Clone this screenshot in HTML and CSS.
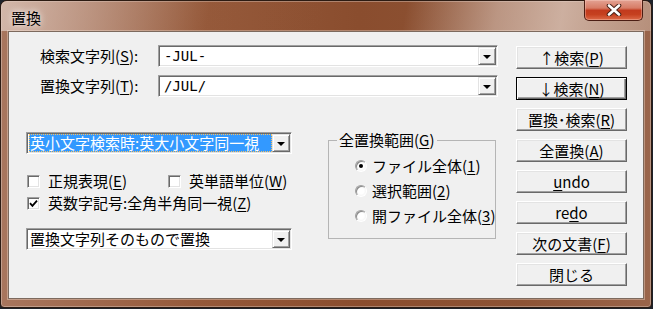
FILE: index.html
```html
<!DOCTYPE html>
<html lang="ja">
<head>
    <meta charset="UTF-8">
    <title>置換</title>
    <link rel="stylesheet" href="styles.css">
</head>
<body>

<div class="window">
    <div class="titlebar">
        <span class="title">置換</span>
        <button class="close-btn" type="button">
            <svg width="16" height="12" viewBox="0 0 16 12">
                <path d="M3 1.5 L13 10.5 M13 1.5 L3 10.5" stroke="#4a2218" stroke-width="4.6" stroke-linecap="round"/>
                <path d="M3 1.5 L13 10.5 M13 1.5 L3 10.5" stroke="#ffffff" stroke-width="2.6" stroke-linecap="round"/>
            </svg>
        </button>
    </div>

    <div class="panel">
        <div class="main">
            <div class="field-row">
                <label class="field-label">検索文字列(<u>S</u>):</label>
                <div class="combo edit">
                    <span class="combo-text mono">-JUL-</span>
                    <span class="drop-btn"></span>
                </div>
            </div>
            <div class="field-row">
                <label class="field-label">置換文字列(<u>T</u>):</label>
                <div class="combo edit">
                    <span class="combo-text mono">/JUL/</span>
                    <span class="drop-btn"></span>
                </div>
            </div>

            <div class="lower">
                <div class="options">
                    <div class="combo select">
                        <span class="combo-text"><span class="selected">英小文字検索時:英大小文字同一視</span></span>
                        <span class="drop-btn"></span>
                    </div>
                    <div class="check-row first">
                        <label class="check"><span class="box"></span>正規表現(<u>E</u>)</label>
                        <label class="check"><span class="box"></span>英単語単位(<u>W</u>)</label>
                    </div>
                    <div class="check-row">
                        <label class="check"><span class="box checked">
                            <svg width="9" height="9" viewBox="0 0 9 9"><path d="M1 4.2 L3.4 6.8 L8 1.6" fill="none" stroke="#000" stroke-width="1.8"/></svg>
                        </span>英数字記号:全角半角同一視(<u>Z</u>)</label>
                    </div>
                    <div class="combo select bottom">
                        <span class="combo-text">置換文字列そのもので置換</span>
                        <span class="drop-btn"></span>
                    </div>
                </div>

                <fieldset class="group">
                    <legend>全置換範囲(<u>G</u>)</legend>
                    <div class="radios">
                        <label class="radio"><span class="dot on"></span>ファイル全体(<u>1</u>)</label>
                        <label class="radio"><span class="dot"></span>選択範囲(<u>2</u>)</label>
                        <label class="radio"><span class="dot"></span>開ファイル全体(<u>3</u>)</label>
                    </div>
                </fieldset>
            </div>
        </div>

        <div class="buttons">
            <button class="btn" type="button">↑検索(<u>P</u>)</button>
            <button class="btn default" type="button">↓検索(<u>N</u>)</button>
            <button class="btn" type="button">置換･検索(<u>R</u>)</button>
            <button class="btn" type="button">全置換(<u>A</u>)</button>
            <button class="btn" type="button"><u>u</u>ndo</button>
            <button class="btn" type="button">re<u>d</u>o</button>
            <button class="btn" type="button">次の文書(<u>F</u>)</button>
            <button class="btn" type="button">閉じる</button>
        </div>
    </div>
</div>

</body>
</html>
```

FILE: styles.css
```css
* {
    box-sizing: border-box;
}

body {
    margin: 0;
    background-color: #1e222a;
    font-family: "Noto Sans CJK JP", "Noto Sans", sans-serif;
    font-size: 15px;
    color: #000;
}

u {
    text-decoration: underline;
    text-underline-offset: 2px;
}

.window {
    width: 652px;
    height: 308px;
    padding: 0 7px;
    display: flex;
    flex-direction: column;
    border: 1px solid #2c1b12;
    border-radius: 7px 7px 4px 4px;
    background: linear-gradient(90deg, #a8765e 0%, #95593a 30%, #8a4d2e 55%, #8d5335 80%, #9a654b 100%);
    box-shadow: inset 0 0 0 1px rgba(255, 255, 255, 0.3);
}

/* title bar */
.titlebar {
    height: 30px;
    margin: 0 -7px;
    padding: 0 8px 0 10px;
    display: flex;
    align-items: flex-start;
    border-radius: 6px 6px 0 0;
    background: linear-gradient(100deg,
        rgba(225, 205, 195, 0.75) 0%,
        rgba(215, 190, 178, 0.5) 14%,
        rgba(160, 100, 70, 0.1) 32%,
        rgba(0, 0, 0, 0) 50%,
        rgba(0, 0, 0, 0) 62%,
        rgba(225, 205, 195, 0.55) 76%,
        rgba(230, 212, 202, 0.7) 86%,
        rgba(205, 178, 162, 0.55) 100%);
}

.title {
    margin-top: 8px;
    line-height: 18px;
    text-shadow: 0 0 6px rgba(255, 255, 255, 0.8), 0 0 10px rgba(255, 255, 255, 0.5);
}

.close-btn {
    margin-left: auto;
    margin-top: -1px;
    width: 59px;
    height: 21px;
    padding: 0;
    display: flex;
    align-items: center;
    justify-content: center;
    border: 1px solid #4b1d13;
    border-top: none;
    border-radius: 0 0 5px 5px;
    background: linear-gradient(#e3a293 0%, #d77c66 40%, #c23a1e 52%, #c5401f 72%, #dd6a48 100%);
    box-shadow: inset 0 0 0 1px rgba(255, 220, 210, 0.35);
}

/* client area */
.panel {
    height: 268px;
    display: flex;
    padding: 13px 0 0 17px;
    background-color: #f0f0f0;
    border: 1px solid #7d6a5e;
    box-shadow: 0 0 0 1px rgba(255, 240, 230, 0.35);
}

.main {
    width: 472px;
}

.field-row {
    height: 22px;
    display: flex;
    align-items: center;
}

.field-row + .field-row {
    margin-top: 8px;
}

.field-label {
    width: 132px;
    padding-left: 14px;
    line-height: 18px;
}

.combo {
    height: 22px;
    display: flex;
    align-items: center;
    padding: 1px;
    background-color: #fff;
    border: 1px solid;
    border-color: #a0a0a0 #fff #fff #a0a0a0;
    box-shadow: inset 1px 1px #696969, inset -1px -1px #e3e3e3;
}

.combo.edit {
    width: 340px;
}

.combo.select {
    width: 266px;
}

.combo.bottom {
    margin-top: 14px;
}

.combo-text {
    flex: 1;
    min-width: 0;
    padding-left: 2px;
    line-height: 18px;
    white-space: nowrap;
}

.mono {
    padding-left: 4px;
    font-family: "DejaVu Sans Mono", monospace;
    font-size: 14px;
}

.selected {
    display: block;
    margin-left: -1px;
    padding-left: 1px;
    color: #fff;
    background-color: #3399ff;
    outline: 1px dotted #f8c060;
    outline-offset: -1px;
}

.drop-btn {
    width: 18px;
    height: 18px;
    flex: none;
    display: flex;
    align-items: center;
    justify-content: center;
    background-color: #f0f0f0;
    border: 1px solid;
    border-color: #e3e3e3 #696969 #696969 #e3e3e3;
    box-shadow: inset 1px 1px #fff, inset -1px -1px #a0a0a0;
}

.drop-btn::after {
    content: "";
    border-left: 4px solid transparent;
    border-right: 4px solid transparent;
    border-top: 4px solid #000;
    margin-top: 1px;
}

.lower {
    display: flex;
    margin-top: 35px;
}

.options {
    width: 302px;
}

.check-row {
    height: 22px;
    display: flex;
    align-items: center;
}

.check-row.first {
    margin-top: 16px;
}

.check {
    width: 141px;
    padding-left: 1px;
    display: flex;
    align-items: center;
    white-space: nowrap;
    line-height: 18px;
}

.box {
    width: 13px;
    height: 13px;
    flex: none;
    margin-right: 8px;
    display: flex;
    align-items: center;
    justify-content: center;
    background-color: #fff;
    border: 1px solid;
    border-color: #a0a0a0 #fff #fff #a0a0a0;
    box-shadow: inset 1px 1px #696969, inset -1px -1px #e3e3e3;
}

/* group box */
.group {
    width: 166px;
    height: 107px;
    margin: 0;
    padding: 0;
    border: 1px solid #b5b5b5;
}

.group legend {
    margin-left: 8px;
    padding: 0 2px;
    line-height: 16px;
}

.radios {
    padding: 5px 0 0 26px;
}

.radio {
    height: 25px;
    display: flex;
    align-items: center;
    white-space: nowrap;
    line-height: 18px;
}

.dot {
    width: 12px;
    height: 12px;
    flex: none;
    margin-right: 5px;
    display: flex;
    align-items: center;
    justify-content: center;
    border-radius: 50%;
    border: 1px solid #a0a0a0;
    border-right-color: #fff;
    border-bottom-color: #fff;
    background: radial-gradient(circle at 50% 50%, #fff 40%, #ececec 100%);
    box-shadow: inset 1px 1px #8a8a8a;
}

.dot.on::after {
    content: "";
    width: 4px;
    height: 4px;
    border-radius: 50%;
    background-color: #000;
}

/* command buttons */
.buttons {
    width: 111px;
    margin-left: 18px;
    margin-top: 1px;
    display: flex;
    flex-direction: column;
    gap: 8px;
}

.btn {
    height: 23px;
    padding: 0;
    font: inherit;
    line-height: 18px;
    color: #000;
    background-color: #f0f0f0;
    border: 1px solid;
    border-color: #fff #696969 #696969 #fff;
    box-shadow: inset -1px -1px #a0a0a0, inset 1px 1px #e3e3e3;
}

.btn.default {
    border-color: #000;
    box-shadow: inset 1px 1px #fff, inset -1px -1px #696969, inset -2px -2px #a0a0a0;
}
```
